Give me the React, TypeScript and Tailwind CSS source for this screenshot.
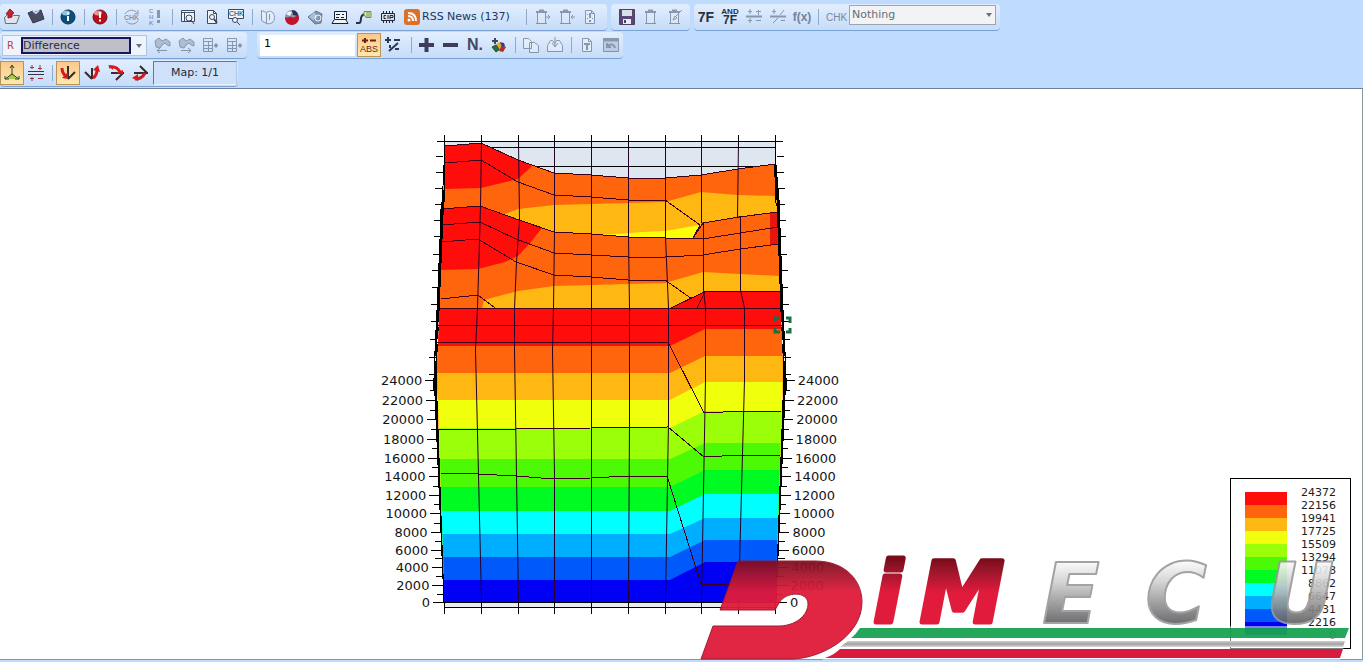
import { useState, type ReactNode } from "react";
import clsx from "clsx";

const BANDS = [
  { color: "#ff0d0a", left: 308, right: 292 },
  { color: "#ff650c", left: 346, right: 329 },
  { color: "#ffb812", left: 373, right: 356 },
  { color: "#f0ff0c", left: 400, right: 382 },
  { color: "#9cff0a", left: 428, right: 411 },
  { color: "#4dfa05", left: 459, right: 443 },
  { color: "#00fb22", left: 487, right: 470 },
  { color: "#00ffff", left: 511, right: 494 },
  { color: "#00aeff", left: 534, right: 518 },
  { color: "#0059fb", left: 557, right: 540 },
  { color: "#0000f5", left: 580, right: 562 },
];

const LEGEND = ["24372", "22156", "19941", "17725", "15509", "13294", "11078", "8862", "6647", "4431", "2216", "0"];

const COLUMNS = [
  "481,141 480,206 477,308 475,350 478,475 481,602",
  "518,141 519,220 516,262 514,308 514,350 516,475 518,602",
  "554,141 554,232 553,308 552,350 554,475 554,602",
  "591,141 591,602",
  "628,141 628,237 629,308 629,420 628,602",
  "665,141 665,237 668,308 668,420 665,602",
  "701,141 701,223 703,223 703,290 705,308 705,380 701,602",
  "738,141 737,217 740,217 740,290 744,308 744,380 738,602",
];

const MINOR_TICKS = [
  141, 156, 172, 188, 204, 220, 236, 254, 270, 287, 304, 321, 339, 357, 374, 390, 410, 429, 448, 467, 486, 504, 523,
  541, 558, 576, 594,
];

const SCALE = [
  { label: "24000", y: 380 },
  { label: "22000", y: 400 },
  { label: "20000", y: 419 },
  { label: "18000", y: 439 },
  { label: "16000", y: 458 },
  { label: "14000", y: 476 },
  { label: "12000", y: 495 },
  { label: "10000", y: 513 },
  { label: "8000", y: 532 },
  { label: "6000", y: 550 },
  { label: "4000", y: 567 },
  { label: "2000", y: 585 },
  { label: "0", y: 602 },
];

// left side of the box at a given height, the right side mirrors it around x = 610
function edgeX(y: number) {
  if (y < 370) return 444 - ((y - 141) * 8) / 229;
  return 436 + ((y - 370) * 8) / 232;
}

function bandPath(left: number, right: number) {
  const start = edgeX(left) + 1;
  const end = 1219 - edgeX(right);
  const rightWaist = right < 370 ? "L783 370" : "";
  const leftWaist = left < 370 ? "L437 370" : "";
  return `M${start} ${left}H670L705 ${right}H${end}${rightWaist}L776 602H444${leftWaist}z`;
}

function Icon({ children, faded }: { children: ReactNode; faded?: boolean }) {
  return (
    <svg viewBox="0 0 18 18" className={clsx("size-[18px]", faded && "opacity-50")} fill="none" stroke="#3d4a60">
      {children}
    </svg>
  );
}

function Tool({ label, active, children }: { label: string; active?: boolean; children: ReactNode }) {
  return (
    <button
      type="button"
      aria-label={label}
      className={clsx(
        "flex h-6 w-6 shrink-0 items-center justify-center",
        active && "border border-[#b9935a] bg-gradient-to-b from-[#fbc98a] to-[#fde9b0]"
      )}
    >
      {children}
    </button>
  );
}

function Sep() {
  return (
    <div className="flex w-2 shrink-0 justify-center">
      <div className="h-4 w-px bg-[#8fa9cc]" />
    </div>
  );
}

function Bar({ className, children }: { className?: string; children: ReactNode }) {
  return (
    <div
      className={clsx(
        "flex h-[27px] shrink-0 items-center rounded-sm border-b border-[#7aa2d6] bg-gradient-to-b from-[#e2eeff] to-[#c6dcf8]",
        className
      )}
    >
      {children}
    </div>
  );
}

function Arrow() {
  return (
    <svg viewBox="0 0 6 4" className="pointer-events-none absolute top-2 right-1 h-1 w-1.5">
      <path d="M0 0h6L3 4z" fill="#68727f" />
    </svg>
  );
}

function Page({ children }: { children?: ReactNode }) {
  return (
    <>
      <path d="M4.500 2.500h6l3 3v10h-9zM10.500 2.500v3h3" fill="#eef3fa" />
      {children}
    </>
  );
}

function Clip({ children }: { children?: ReactNode }) {
  return (
    <>
      <path d="M4.500 4.500h8v11h-8z" fill="#e4ecf6" />
      <path d="M3 4h11M6 2.500h5" strokeWidth="2" />
      <path d="M3 15.500h11" />
      {children}
    </>
  );
}

function Binoculars({ arrow }: { arrow: string }) {
  return (
    <>
      <path d="M2 5l4-3 3 3 4-2 4 3v4l-3-1-2-2-3 2-2 3-4-1z" fill="#8a95a6" />
      <path d={arrow} />
    </>
  );
}

function TableIcon() {
  return (
    <>
      <path d="M2.500 2.500h9v13h-9zM2 5.500h10M2 9.500h10M2 12.500h10M7.500 5v11" />
      <path d="M13 9.500h4M15 7.500v4" strokeWidth="2" />
    </>
  );
}

function TopRow() {
  return (
    <div className="flex h-7 gap-1">
      <Bar className="w-[607px]">
        <Tool label="Open">
          <Icon>
            <path d="M2.500 15.500l-1-6 3-3h5l1 1h6l-3 8z" fill="#dfe5ee" stroke="#646c7e" />
            <path d="M3 6l4-5 4 4-2 1v3l-4 1V6z" fill="#d0202c" stroke="#8c2030" />
          </Icon>
        </Tool>
        <Tool label="Import">
          <Icon>
            <path d="M1 5l5-2 1 1 7-2 3 9-11 4z" fill="#4a4c62" stroke="#34364a" />
            <path d="M6 3l3 2 3-3" stroke="#c8d4ea" strokeWidth="2" />
          </Icon>
        </Tool>
        <Sep />
        <Tool label="Information">
          <Icon>
            <circle cx="9" cy="9" r="7" fill="#0b4d7c" stroke="#0d3550" />
            <ellipse cx="7" cy="5" rx="4" ry="2.500" fill="#8fc6dd" stroke="none" />
            <path d="M9 8v5M9 4.500v2" stroke="white" strokeWidth="2" />
          </Icon>
        </Tool>
        <Sep />
        <Tool label="Warning">
          <Icon>
            <circle cx="9" cy="9" r="7" fill="#b80f1a" stroke="#701018" />
            <ellipse cx="7" cy="5" rx="4" ry="2.500" fill="#e69694" stroke="none" />
            <path d="M9 4v6M9 11.500v2" stroke="white" strokeWidth="2" />
          </Icon>
        </Tool>
        <Sep />
        <Tool label="Checksum update">
          <Icon faded>
            <path d="M2 6c3-5 10-5 13 0M15 2v4h-4M3 13c3 4 9 4 12 0" />
            <text x="1" y="12" className="font-['Liberation_Sans'] text-[7px] font-bold" fill="#3d4a60" stroke="none">CHK</text>
          </Icon>
        </Tool>
        <Tool label="Checksum warning">
          <Icon faded>
            <g fill="#3d4a60" stroke="none" className="font-['Liberation_Sans'] text-[6px] font-bold">
              <text x="2" y="5">C</text>
              <text x="2" y="11">H</text>
              <text x="2" y="17">K</text>
            </g>
            <path d="M11.500 2v8M11.500 12v3" strokeWidth="3" />
          </Icon>
        </Tool>
        <Sep />
        <Tool label="Find window">
          <Icon>
            <path d="M2.500 2.500h13v11h-13zM2 4.500h14M5.500 5v8" fill="#eef3fa" />
            <circle cx="10" cy="10" r="3" fill="#eef3fa" />
            <path d="M12 12l3 4" />
          </Icon>
        </Tool>
        <Tool label="Find in file">
          <Icon>
            <Page />
            <circle cx="9" cy="9" r="2.500" />
            <path d="M11 11l3 4" strokeWidth="2" />
          </Icon>
        </Tool>
        <Tool label="Find checksum">
          <Icon>
            <path d="M1.500 1.500h15v9h-15z" fill="#eef3fa" />
            <text x="2" y="8" className="font-['Liberation_Sans'] text-[7px]" fill="#202838" stroke="none">CHK</text>
            <circle cx="8" cy="12" r="2.500" fill="#eef3fa" />
            <path d="M10 14l3 3" />
          </Icon>
        </Tool>
        <Sep />
        <Tool label="Documents">
          <Icon faded>
            <path d="M2.500 2.500l5 2v11l-5-3zM7.500 4.500c4-3 8 0 8 5s-4 7-8 6M10.500 6v6" fill="#eef3fa" />
          </Icon>
        </Tool>
        <Tool label="Globe">
          <Icon>
            <circle cx="9" cy="9" r="7" fill="#8796af" stroke="none" />
            <path d="M2 9c3 2 5-2 8 1l5-3c3 4-1 10-6 10s-7-4-7-8z" fill="#c3122c" stroke="none" />
            <path d="M9 2c4 0 6 3 6 6l-5-1z" fill="#253355" stroke="none" />
            <path d="M3 6c2-3 4-3 6-2l-2 4z" fill="#f1f4f9" stroke="none" />
          </Icon>
        </Tool>
        <Tool label="Send">
          <Icon>
            <path d="M1 9l8-6 6 3-1 9-6 1z" fill="#8193ae" stroke="#667894" />
            <path d="M2 9l5-5 4 5-5 3z" fill="#a6c2dc" stroke="none" />
            <circle cx="11" cy="10" r="3" stroke="#eef3fa" />
          </Icon>
        </Tool>
        <Tool label="Computer">
          <Icon>
            <path d="M3.500 3.500h12v8h-12zM3 12l-2 3.500h16L15 12" fill="#eef3fa" stroke="#182030" />
            <path d="M5 6.500h4M5 9.500h3M11 6.500h2M10 9.500h3" stroke="#182030" />
          </Icon>
        </Tool>
        <Tool label="Connection">
          <Icon>
            <path d="M1 15h3c4 0-1-8 6-9" stroke="#283040" strokeWidth="2" />
            <path d="M9 3.500h7v6h-5l-2-3zM12 4v5M14 4v5" fill="#e2efb0" stroke="#6c9448" />
          </Icon>
        </Tool>
        <Tool label="Chip">
          <Icon>
            <path d="M2.500 5.500h13v7h-13z" fill="#d8e2ef" stroke="#202838" />
            <path d="M4.500 3v2M7.500 3v2M10.500 3v2M13.500 3v2M4.500 13v2M7.500 13v2M10.500 13v2M13.500 13v2" stroke="#202838" />
            <path d="M7 7.500H5v3h2M9 7v4M11 11V7.500h3v2h-3" stroke="#202838" />
          </Icon>
        </Tool>
        <button type="button" className="flex w-[122px] items-center gap-0.5 pl-1 text-[11px] text-[#1d3560]">
          <svg viewBox="0 0 16 16" className="size-4">
            <rect x="0" y="0" width="16" height="16" rx="3" fill="#db7128" />
            <circle cx="5" cy="11" r="1.500" fill="white" />
            <path d="M4 7c3 0 5 2 5 5M4 4c5 0 8 3 8 8" fill="none" stroke="white" strokeWidth="2" />
          </svg>
          <span className="whitespace-nowrap">RSS News (137)</span>
        </button>
        <Sep />
        <Tool label="Export version">
          <Icon faded><Clip><path d="M13 9h4M15 7l2 2-2 2" /></Clip></Icon>
        </Tool>
        <Tool label="Import version">
          <Icon faded><Clip><path d="M14 9h4M16 7l-2 2 2 2" /></Clip></Icon>
        </Tool>
        <Tool label="File properties">
          <Icon faded><Page><path d="M9 5v5M9 12v2" strokeWidth="2" /><path d="M6.500 6v1M6.500 10v1M11.500 10v1" /></Page></Icon>
        </Tool>
      </Bar>
      <Bar className="w-[79px] pl-1">
        <Tool label="Save">
          <Icon>
            <path d="M1.500 1.500h15v15h-15z" fill="#5b4675" stroke="#514064" />
            <path d="M4 2h10v6H4z" fill="#d9dfe9" stroke="none" />
            <path d="M5 11h8v5H5z" fill="#e8edf5" stroke="none" />
            <path d="M7 12v3" strokeWidth="2" />
          </Icon>
        </Tool>
        <Tool label="Clipboard"><Icon faded><Clip /></Icon></Tool>
        <Tool label="Edit clipboard">
          <Icon faded><Clip><path d="M7 12l2-4 2 2zM10 8l6-6" /></Clip></Icon>
        </Tool>
      </Bar>
      <Bar className="w-[306px]">
        <Tool label="Hex value">
          <span className="font-['Liberation_Sans'] text-sm font-bold text-[#27303f]">7F</span>
        </Tool>
        <Tool label="And hex value">
          <span className="flex flex-col items-center font-['Liberation_Sans'] font-bold text-[#27303f]">
            <span className="text-[8px] leading-[6px]">AND</span>
            <span className="text-xs leading-[10px]">7F</span>
          </span>
        </Tool>
        <Tool label="Align values"><Icon faded><path d="M1 8.500h16" strokeWidth="2" /><path d="M5 1v5M3 3.500h4M11 3.500h5M13.500 2v5M5 10v5M3 12.500h4M11 12.500h5" /></Icon></Tool>
        <Tool label="Align percent"><Icon faded><path d="M1 8.500h16" strokeWidth="2" /><path d="M5 1v5M3 3.500h4M11 7l4-5M4 15l5-5M12 12.500h4" /></Icon></Tool>
        <Tool label="Function">
          <span className="font-['Liberation_Sans'] text-xs font-bold text-[#73839d]">f(x)</span>
        </Tool>
        <Sep />
        <label htmlFor="chk" className="w-[27px] pl-1 font-['Liberation_Sans'] text-[10px] text-[#7587a3]">CHK</label>
        <div className="relative mb-1 h-5 w-[147px]">
          <select id="chk" className="block h-5 w-full appearance-none border border-[#9aa5b4] bg-[#f1f3f5] px-0.5 text-[11px] text-[#686d76]">
            <option>Nothing</option>
          </select>
          <Arrow />
        </div>
      </Bar>
    </div>
  );
}

function MiddleRow({ value, onChange }: { value: string; onChange: (v: string) => void }) {
  return (
    <div className="flex h-7 gap-2.5">
      <Bar className="w-[247px] pl-0.5">
        <div className="relative mr-[3px] flex h-[21px] w-[145px] items-center border border-[#b4c4dc] bg-[#edf4fd]">
          <label htmlFor="mode" className="w-[18px] pl-1 text-[10px] text-[#ad4935]">R</label>
          <select id="mode" className="block h-[17px] w-[110px] appearance-none border-2 border-[#17155f] bg-[#bfbfca] text-[11px] leading-[13px] text-[#2b2b40]">
            <option>Difference</option>
          </select>
          <Arrow />
        </div>
        <Tool label="Previous difference">
          <Icon faded><Binoculars arrow="M4 14.500h10M7 12l-3 2.500L7 17" /></Icon>
        </Tool>
        <Tool label="Next difference">
          <Icon faded><Binoculars arrow="M4 14.500h10M11 12l3 2.500-3 2.500" /></Icon>
        </Tool>
        <Tool label="Insert column"><Icon faded><TableIcon /></Icon></Tool>
        <Tool label="Insert row"><Icon faded><TableIcon /></Icon></Tool>
      </Bar>
      <Bar className="w-[366px] pl-[3px]">
        <input
          aria-label="Change value"
          value={value}
          onChange={(e) => onChange(e.target.value)}
          className="mr-0.5 h-[21px] w-[95px] bg-white px-1 pb-1 text-[11px] text-black outline-none"
        />
        <Tool label="Absolute" active>
          <span className="flex flex-col items-center font-['Liberation_Sans'] text-[#6b2310]">
            <svg viewBox="0 0 16 7" className="h-[7px] w-4"><path d="M1 3.500h6M4 1v5M9 3.500h6" stroke="#6b2310" strokeWidth="2" /></svg>
            <span className="text-[9px] leading-[10px]">ABS</span>
          </span>
        </Tool>
        <Tool label="Percent">
          <Icon><path d="M1 4h6M4 1v6M10 4h6M5 15L14 7M6 9v3M11 13h4" stroke="#2d3952" strokeWidth="2" /></Icon>
        </Tool>
        <div className="w-1" />
        <Sep />
        <Tool label="Increase"><Icon><path d="M1 9h15M8.500 2v14" stroke="#3c3d5c" strokeWidth="4" /></Icon></Tool>
        <Tool label="Decrease"><Icon><path d="M1 9h15" stroke="#3c3d5c" strokeWidth="4" /></Icon></Tool>
        <Tool label="Original value">
          <span className="font-['Liberation_Sans'] text-base font-bold text-[#444862]">N.</span>
        </Tool>
        <Tool label="Paint">
          <Icon>
            <path d="M2 5h6M5 2v6" stroke="#3b4660" strokeWidth="2" />
            <path d="M2 11l4-2 4 4-4 3z" fill="#276c43" stroke="#1e5637" />
            <path d="M6 8l4-2 4 5-4 3z" fill="#e6a52c" stroke="none" />
            <path d="M12 9l4 2-3 5-4-1z" fill="#b52a27" stroke="none" />
            <path d="M10 6l4 1 1 3-3 1z" fill="#2d428f" stroke="none" />
          </Icon>
        </Tool>
        <Sep />
        <Tool label="Copy"><Icon faded><path d="M1.500 2.500h5l3 3v7h-8zM7.500 6.500h5l4 3v7h-9z" fill="#eef3fa" /></Icon></Tool>
        <Tool label="Paste"><Icon faded><path d="M1.500 15.500v-6l3-5h2l2 3 2-3h3l3 5v6zM9 1v9M6 7l3 4 3-4" fill="#eef3fa" /></Icon></Tool>
        <Sep />
        <Tool label="Text"><Icon faded><Page><path d="M6 8h6M9 8v6" strokeWidth="2" /></Page></Icon></Tool>
        <Tool label="Undo window">
          <Icon faded><path d="M1.500 2.500h15v13h-15z" fill="#a9b8cc" /><path d="M1 4h16" strokeWidth="3" /><path d="M5 11c2-4 7-3 8 1M5 7v4h4" strokeWidth="2" /></Icon>
        </Tool>
      </Bar>
    </div>
  );
}

function BottomRow() {
  return (
    <Bar className="w-[238px]">
      <Tool label="3D view" active>
        <Icon>
          <path d="M9 9l-6 6h12z" fill="#a9c84a" stroke="none" />
          <path d="M9 2v8L2 15M9 10l7 5M7 4l2-3 2 3M2 12v3h4M16 12v3h-4" stroke="#23482c" />
        </Icon>
      </Tool>
      <Tool label="Level">
        <Icon>
          <path d="M1 7.500h16M1 10.500h16" stroke="#303848" />
          <path d="M5 1v4M3 3.500h4M5 13v4M3 14.500h4M13 1v5M11 4.500h4M11 14.500h5" stroke="#9b3440" />
        </Icon>
      </Tool>
      <Sep />
      <Tool label="Rotate left" active>
        <Icon>
          <path d="M9 2v13M9 15l7-7" stroke="#3a2a2a" strokeWidth="2" />
          <path d="M3 4c0 4 1 6 4 8" stroke="#d61820" strokeWidth="3" />
          <path d="M9 15V8l-6 6z" fill="#d61820" stroke="none" />
        </Icon>
      </Tool>
      <Tool label="Rotate right">
        <Icon>
          <path d="M9 4v11M9 15L2 8" stroke="#3a2a2a" strokeWidth="2" />
          <path d="M10 14c3-2 4-4 4-8" stroke="#d61820" strokeWidth="3" />
          <path d="M15 1l2 7-7-2z" fill="#d61820" stroke="none" />
        </Icon>
      </Tool>
      <Tool label="Rotate up">
        <Icon>
          <path d="M4 9h13M16 9l-7 7" stroke="#3a2a2a" strokeWidth="2" />
          <path d="M2 3c6-1 9 1 11 5" stroke="#d61820" strokeWidth="3" />
          <path d="M1 1l5 1v4z" fill="#d61820" stroke="none" />
          <path d="M9 9l7-3v4z" fill="#d61820" stroke="none" />
        </Icon>
      </Tool>
      <Tool label="Rotate down">
        <Icon>
          <path d="M3 9h14M16 9L9 2" stroke="#3a2a2a" strokeWidth="2" />
          <path d="M4 15c5 0 8-2 10-6" stroke="#d61820" strokeWidth="3" />
          <path d="M1 14l6-4v7z" fill="#d61820" stroke="none" />
        </Icon>
      </Tool>
      <output className="ml-px flex h-6 w-[84px] items-center justify-center border border-t-[#697890] border-r-[#b3c8e6] border-b-[#e8f1fd] border-l-[#697890] bg-[#cfe1f8] text-[11px] text-[#202b3d]">
        Map: 1/1
      </output>
    </Bar>
  );
}

function SurfaceChart() {
  return (
    <svg viewBox="365 129 490 490" className="h-[490px] w-[490px] shrink-0" fill="none" role="img" aria-label="Map surface">
      <path d="M444 141H776V602H444z" fill="#dee6ef" />
      <path d="M444 602H776V607H444z" fill="#e8ecf3" />
      <g shapeRendering="crispEdges" stroke="black">
        <path d="M437 141.500H783M444 147.500H776M490 166.500H776" />
      </g>

      {/* rear rows of the map */}
      <path d="M445 146L481 143L518 160L554 173L591 175L628 178L665 178L701 175L738 169L775 164L779 245H441z" fill="#ff650c" />
      <path d="M445 146L481 143L518 160L532 166L518 179L481 188L444 189z" fill="#ff0d0a" />
      <path d="M500 216L518 209L554 205L591 204L665 202L701 192L738 195L777 196V240H554z" fill="#ffb812" />
      <path d="M600 235L643 232L665 231L700 225L696 240H600z" fill="#fbff0c" />
      <path d="M441 209L480 206L519 220L554 232L591 234L628 237L665 238L693 238L703 223L739 217L778 212L782 309H438z" fill="#ff650c" />
      <path d="M441 209L480 206L519 220L542 228L530 243L518 256L505 262L478 269L440 270z" fill="#ff0d0a" />
      <path d="M770 213L778 212L780 244L770 245z" fill="#e8140e" />
      <path d="M482 309L484 300L518 291L554 286L591 285L665 283L703 272L740 274L780 276V309z" fill="#ffb812" />

      {/* front face */}
      {BANDS.map((band) => (
        <path key={band.color} d={bandPath(band.left, band.right)} fill={band.color} />
      ))}

      <g stroke="#3c0018" shapeRendering="crispEdges">
        <path d="M445 146L481 143L518 160L554 173L591 175L628 178L665 178L701 175L738 169L775 164" />
        <path d="M445 163L481 160L518 182L554 195L591 197L628 200L665 200L700 225L693 238" />
        <path d="M441 209L480 206L519 220L554 232L591 234L628 237L665 238L693 238L703 223L739 217L778 212" />
        <path d="M441 225L480 222L516 239L554 253L591 255L628 257L665 257L703 255L740 249L779 244" />
        <path d="M665 238L703 239L740 233L778 227" />
        <path d="M441 242L478 239L516 262L554 275L591 277L628 280L665 280L692 299M697 308L705 292" />
        <path d="M441 299L478 295L495 308" />
        <path d="M439 308.500H670L705 291.500H782M670 308.500H782M438 325.500H783M437 342.500H668" />
        <path d="M668 342L704 413L743 411L781 411M438 429L516 429L591 428L668 427L704 457L741 455L780 455" />
        <path d="M440 473L478 474L516 476L554 479L591 478L628 476L667 476L701 584H775" />
      </g>
      <g stroke="#26002a" transform="translate(.5 0)">
        {COLUMNS.map((points) => (
          <polyline key={points} points={points} />
        ))}
      </g>

      {/* side walls, drawn as several nearly parallel lines */}
      <g stroke="black" shapeRendering="crispEdges">
        <path d="M444 141L445 200L441 209L436 372L444 602M444 165L437 310L434 372L444 602" />
        <path d="M444 190L442 215L438 312" strokeWidth="3" />
        <path d="M438 310L434 395" strokeWidth="3" strokeDasharray="12 5" />
        <path d="M435 370L439 470" strokeWidth="2" />
        <path d="M775 141L775 200L779 212L784 372L776 602M776 165L783 310L786 372L776 602" />
        <path d="M775 165L778 200L782 312" strokeWidth="3" />
        <path d="M782 310L786 395" strokeWidth="3" strokeDasharray="12 5" />
        <path d="M785 370L781 470" strokeWidth="2" />
      </g>

      <g stroke="black" shapeRendering="crispEdges">
        <path d="M437 602.500H783M444 607.500H776" />
        {[444, 481, 518, 554, 591, 628, 665, 701, 738, 775].map((x) => (
          <path key={x} d={`M${x}.500 135V148M${x}.500 602V614`} />
        ))}
        {MINOR_TICKS.map((y) => {
          const x = edgeX(y);
          return <path key={y} d={`M${x - 7} ${y}.500H${x}M${1220 - x} ${y}.500H${1227 - x}`} />;
        })}
        {SCALE.map(({ y }) => {
          const x = edgeX(y);
          return <path key={y} d={`M${x - 11} ${y}.500H${x}M${1220 - x} ${y}.500H${1231 - x}`} />;
        })}
      </g>

      <g className="font-['DejaVu_Sans'] text-[13px]" fill="#151515">
        {SCALE.map(({ label, y }) => (
          <g key={label}>
            <text x={edgeX(y) - 14} y={y + 5} textAnchor="end">{label}</text>
            <text x={1234 - edgeX(y)} y={y + 5}>{label}</text>
          </g>
        ))}
      </g>

      <path d="M775 322V318H780M786 318H790V323M790 328V332H786M780 332H775V328" stroke="#187044" strokeWidth="3" />
    </svg>
  );
}

function Legend() {
  return (
    <div className="absolute right-[11px] bottom-2.5 flex h-[171px] w-[121px] justify-between border border-black bg-white px-3.5 pt-[7px]">
      <div className="mt-1.5 w-[42px]">
        {BANDS.map((band) => (
          <div key={band.color} className="h-[13px]" style={{ backgroundColor: band.color }} />
        ))}
      </div>
      <ul className="text-right text-[11px] leading-[13px] text-[#202020]">
        {LEGEND.map((value) => (
          <li key={value}>{value}</li>
        ))}
      </ul>
    </div>
  );
}

function Logo() {
  return (
    <svg viewBox="700 530 662 130" className="absolute right-0 -bottom-px h-[130px] w-[662px]" role="img" aria-label="DiMECU">
      <defs>
        <linearGradient id="red" gradientUnits="userSpaceOnUse" x1="0" y1="560" x2="0" y2="600">
          <stop offset="0" stopColor="#7c0c1b" />
          <stop offset=".25" stopColor="#98152a" />
          <stop offset=".8" stopColor="#e01b3b" />
        </linearGradient>
        <linearGradient id="steel" gradientUnits="userSpaceOnUse" x1="0" y1="562" x2="0" y2="626">
          <stop offset="0" stopColor="#fafafa" />
          <stop offset=".3" stopColor="#d2d2d2" />
          <stop offset="1" stopColor="#57575a" />
        </linearGradient>
        <linearGradient id="rail" x1="0" y1="0" x2="0" y2="1">
          <stop offset="0" stopColor="#d0d0d0" />
          <stop offset=".5" stopColor="#a2a2a2" />
          <stop offset="1" stopColor="#d8d8d8" />
        </linearGradient>
      </defs>
      <path d="M856 626H1350L1340 660H822z" fill="white" opacity=".5" />
      <path d="M860 628H1349L1345 638H851C855 635 857 632 860 628z" fill="#0c9d48" opacity=".9" />
      <path d="M848 641H1345L1343 647H840z" fill="url(#rail)" />
      <path d="M840 649H1343L1340 658H825C831 656 836 653 840 649z" fill="#d91b3d" />
      <path
        d="M738 561H815C846 561 862 581 862 602C862 636 822 658 793 659H701L713 626H780C799 625 808 613 808 604C808 591 786 591 779 603L775 610H720z"
        fill="url(#red)"
        stroke="#98152a"
        opacity=".95"
      />
      <g
        className="font-['DejaVu_Sans'] text-[84px] font-bold italic"
        textAnchor="middle"
        strokeLinejoin="round"
      >
        <g fill="url(#red)" stroke="url(#red)" strokeWidth="5">
          <text x="888" y="622">i</text>
          <text x="962" y="622">M</text>
        </g>
        <g fill="url(#steel)" stroke="#9a9a9a" strokeWidth="2" opacity=".9">
          <text x="1071" y="623">E</text>
          <text x="1176" y="623">C</text>
          <text x="1300" y="623">U</text>
        </g>
      </g>
    </svg>
  );
}

export default function App() {
  const [value, setValue] = useState("1");

  return (
    <div className="flex min-h-screen flex-col overflow-hidden bg-[#bfdcfe] font-['DejaVu_Sans',sans-serif]">
      <header className="border-b border-[#71819a] bg-[#bfdcfe] pt-1 pb-px">
        <TopRow />
        <MiddleRow value={value} onChange={setValue} />
        <BottomRow />
      </header>
      <main className="relative mb-0.5 flex flex-1 justify-center border-r border-b border-[#8c979c] bg-white pt-10 pr-[142px]">
        <SurfaceChart />
        <Legend />
        <Logo />
      </main>
    </div>
  );
}
